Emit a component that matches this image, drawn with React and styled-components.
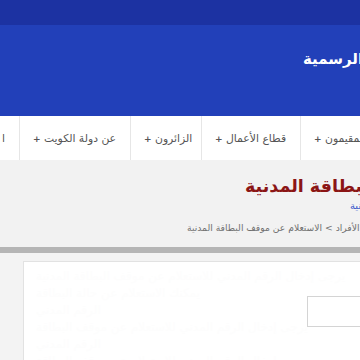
import React from 'react';
import styled, { createGlobalStyle } from 'styled-components';

const GlobalStyle = createGlobalStyle`
    html, body {
        margin: 0;
        padding: 0;
        background: #f2f2f2;
        overflow: hidden;
        font-family: "DejaVu Sans", "Noto Sans", sans-serif;
    }
`;

const Page = styled.div`
    width: 360px;
    height: 360px;
    overflow: hidden;
    display: flex;
    flex-direction: column;
`;

const TopBar = styled.div`
    height: 25px;
    background: #1c32a2;
    flex-shrink: 0;
`;

const Header = styled.div`
    height: 90px;
    background: #2240b9;
    padding-left: 303px;
    padding-top: 24px;
    box-sizing: border-box;
    flex-shrink: 0;
`;

// نصوص عربية تمتد خارج حافة الشاشة اليمنى
const Line = styled.div`
    white-space: nowrap;
    direction: rtl;
    unicode-bidi: isolate;
    width: max-content;
    flex-shrink: 0;
`;

const SiteName = styled(Line)`
    color: #ffffff;
    font-size: 15px;
    font-weight: bold;
    line-height: 20px;
`;

const Nav = styled.div`
    height: 45px;
    background: #ffffff;
    border-top: 1px solid #2240b9;
    display: flex;
    flex-shrink: 0;
    box-sizing: border-box;
`;

const NavItem = styled.div`
    width: ${p => p.w}px;
    flex-shrink: 0;
    box-sizing: border-box;
    border-left: ${p => (p.first ? 'none' : '1px solid #e6e6e6')};
    display: flex;
    align-items: center;
    justify-content: ${p => (p.first ? 'flex-end' : 'flex-start')};
    padding-left: ${p => (p.first ? 0 : 13)}px;
    padding-right: ${p => (p.first ? 14 : 0)}px;
    color: #555;
    font-size: 10.8px;
    white-space: nowrap;
`;

const Plus = styled.span`
    font-size: 9px;
    font-weight: bold;
`;

const PageHead = styled.div`
    padding-top: 14px;
    height: 87px;
    box-sizing: border-box;
    display: flex;
    flex-direction: column;
    flex-shrink: 0;
`;

const Title = styled(Line)`
    margin-left: 245px;
    color: #8b1515;
    font-size: 17.5px;
    font-weight: bold;
    line-height: 24px;
`;

const SubLink = styled(Line)`
    margin-left: 350px;
    margin-top: 1px;
    color: #3656c9;
    font-size: 10px;
    line-height: 14px;
`;

const Crumbs = styled(Line)`
    margin-left: 187px;
    margin-top: 8px;
    color: #6f6f6f;
    font-size: 9.2px;
    line-height: 14px;
`;

const Rule = styled.div`
    height: 6px;
    background: #b5b5b5;
    flex-shrink: 0;
`;

const Content = styled.div`
    flex: 1;
    padding: 8px 0 0 23px;
    display: flex;
    background: #f3f3f3;
`;

const Panel = styled.div`
    flex: 1;
    background: #ffffff;
    border: 1px solid #e2e2e2;
    border-right: none;
    padding: 6px 0 0 12px;
    position: relative;
    overflow: hidden;
`;

const Faint = styled(Line)`
    color: #fdfdfd;
    font-size: 12px;
    line-height: 17px;
`;

const Field = styled.div`
    position: absolute;
    left: 283px;
    top: 34px;
    width: 120px;
    height: 31px;
    border: 1px solid #d4d4d4;
    background: #fff;
    box-sizing: border-box;
`;

export default function App() {
    return (
        <>
            <GlobalStyle />
            <Page>
                <TopBar />
                <Header>
                    <SiteName>بوابة الكويت الرسمية</SiteName>
                </Header>
                <Nav>
                    <NavItem first w={19}>ا</NavItem>
                    <NavItem w={111}><Line>عن دولة الكويت <Plus>+</Plus></Line></NavItem>
                    <NavItem w={71}><Line>الزائرون <Plus>+</Plus></Line></NavItem>
                    <NavItem w={99}><Line>قطاع الأعمال <Plus>+</Plus></Line></NavItem>
                    <NavItem w={120}><Line>المقيمون <Plus>+</Plus></Line></NavItem>
                </Nav>
                <PageHead>
                    <Title>الاستعلام عن موقف البطاقة المدنية</Title>
                    <SubLink>البطاقة المدنية</SubLink>
                    <Crumbs>الرئيسية &gt; الأفراد &gt; الاستعلام عن موقف البطاقة المدنية</Crumbs>
                </PageHead>
                <Rule />
                <Content>
                    <Panel>
                        <Faint>يرجى إدخال الرقم المدني للاستعلام عن موقف البطاقة المدنية</Faint>
                        <Faint>يمكنك الاستعلام عن حالة البطاقة</Faint>
                        <Faint>الرقم المدني</Faint>
                        <Faint>يرجى إدخال الرقم المدني للاستعلام عن موقف البطاقة</Faint>
                        <Faint>الرقم المدني</Faint>
                        <Faint>يرجى إدخال الرقم المدني للاستعلام عن موقف البطاقة</Faint>
                        <Field />
                    </Panel>
                </Content>
            </Page>
        </>
    );
}
